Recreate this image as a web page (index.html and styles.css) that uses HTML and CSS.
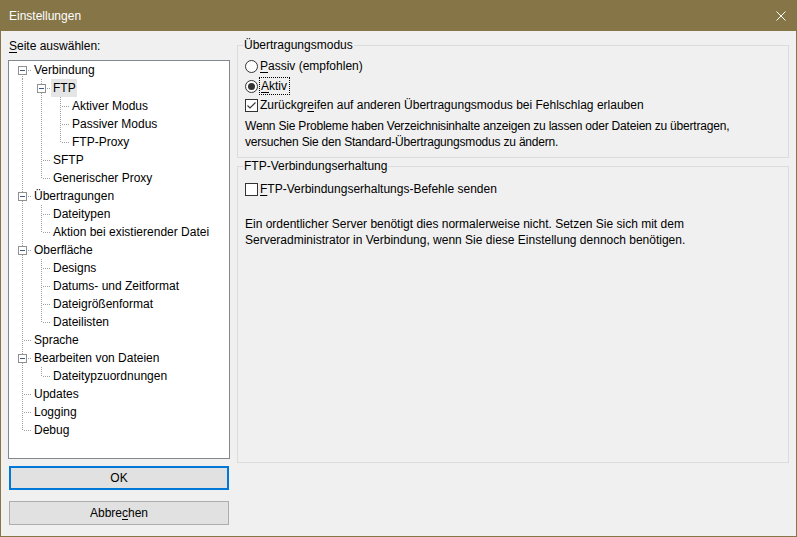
FILE: index.html
```html
<!DOCTYPE html>
<html lang="de">
<head>
<meta charset="utf-8">
<title>Einstellungen</title>
<link rel="stylesheet" href="styles.css">
</head>
<body>
<div class="window">
  <div class="titlebar">
    <span class="title">Einstellungen</span>
    <svg class="close" width="10" height="10" viewBox="0 0 10 10"><path d="M0.5 0.5L9.5 9.5M9.5 0.5L0.5 9.5" stroke="#fff" stroke-width="1" fill="none"/></svg>
  </div>
  <div class="content">
    <div class="left">
      <div class="caption"><u>S</u>eite auswählen:</div>
      <div class="tree">
        <div class="row"><span class="g first"><span class="box"></span></span><span class="lbl">Verbindung</span></div>
        <div class="row"><span class="g v"></span><span class="g tee"><span class="box"></span></span><span class="lbl sel">FTP</span></div>
        <div class="row"><span class="g v"></span><span class="g v"></span><span class="g tee"></span><span class="lbl">Aktiver Modus</span></div>
        <div class="row"><span class="g v"></span><span class="g v"></span><span class="g tee"></span><span class="lbl">Passiver Modus</span></div>
        <div class="row"><span class="g v"></span><span class="g v"></span><span class="g elbow"></span><span class="lbl">FTP-Proxy</span></div>
        <div class="row"><span class="g v"></span><span class="g tee"></span><span class="lbl">SFTP</span></div>
        <div class="row"><span class="g v"></span><span class="g elbow"></span><span class="lbl">Generischer Proxy</span></div>
        <div class="row"><span class="g tee"><span class="box"></span></span><span class="lbl">Übertragungen</span></div>
        <div class="row"><span class="g v"></span><span class="g tee"></span><span class="lbl">Dateitypen</span></div>
        <div class="row"><span class="g v"></span><span class="g elbow"></span><span class="lbl">Aktion bei existierender Datei</span></div>
        <div class="row"><span class="g tee"><span class="box"></span></span><span class="lbl">Oberfläche</span></div>
        <div class="row"><span class="g v"></span><span class="g tee"></span><span class="lbl">Designs</span></div>
        <div class="row"><span class="g v"></span><span class="g tee"></span><span class="lbl">Datums- und Zeitformat</span></div>
        <div class="row"><span class="g v"></span><span class="g tee"></span><span class="lbl">Dateigrößenformat</span></div>
        <div class="row"><span class="g v"></span><span class="g elbow"></span><span class="lbl">Dateilisten</span></div>
        <div class="row"><span class="g tee"></span><span class="lbl">Sprache</span></div>
        <div class="row"><span class="g tee"><span class="box"></span></span><span class="lbl">Bearbeiten von Dateien</span></div>
        <div class="row"><span class="g v"></span><span class="g elbow"></span><span class="lbl">Dateitypzuordnungen</span></div>
        <div class="row"><span class="g tee"></span><span class="lbl">Updates</span></div>
        <div class="row"><span class="g tee"></span><span class="lbl">Logging</span></div>
        <div class="row"><span class="g elbow"></span><span class="lbl">Debug</span></div>
      </div>
      <button class="btn btn-default" type="button">OK</button>
      <button class="btn btn-cancel" type="button">Abbre<u>c</u>hen</button>
    </div>
    <div class="right">
      <fieldset class="group group-mode">
        <legend>Übertragungsmodus</legend>
        <div class="opt opt-first"><span class="radio"></span><span class="text"><u>P</u>assiv (empfohlen)</span></div>
        <div class="opt opt-second"><span class="radio on"></span><span class="text focus"><u>A</u>ktiv</span></div>
        <div class="opt opt-third"><span class="check on"><svg width="11" height="11" viewBox="0 0 11 11"><path d="M1.5 5.5L4 8L9.5 2.5" stroke="#333" stroke-width="1.1" fill="none"/></svg></span><span class="text">Zurückgr<u>e</u>ifen auf anderen Übertragungsmodus bei Fehlschlag erlauben</span></div>
        <p class="para para-mode">Wenn Sie Probleme haben Verzeichnisinhalte anzeigen zu lassen oder Dateien zu übertragen,<br>versuchen Sie den Standard-Übertragungsmodus zu ändern.</p>
      </fieldset>
      <fieldset class="group group-keep">
        <legend>FTP-Verbindungserhaltung</legend>
        <div class="keep-body">
          <div class="opt"><span class="check"></span><span class="text"><u>F</u>TP-Verbindungserhaltungs-Befehle senden</span></div>
          <p class="para para-keep">Ein ordentlicher Server benötigt dies normalerweise nicht. Setzen Sie sich mit dem<br>Serveradministrator in Verbindung, wenn Sie diese Einstellung dennoch benötigen.</p>
        </div>
      </fieldset>
    </div>
  </div>
</div>
</body>
</html>
```
FILE: styles.css
```css
* { box-sizing: border-box; }
html, body { margin: 0; padding: 0; }
body {
  font-family: "Liberation Sans", Arial, sans-serif;
  font-size: 12px;
  color: #000;
  background: #f0f0f0;
}
u { text-underline-offset: 2px; }
.window {
  width: 797px;
  height: 537px;
  background: #857547;
  padding: 0 1px 1px 1px;
  display: flex;
  flex-direction: column;
}
.titlebar {
  height: 31px;
  flex: none;
  display: flex;
  align-items: center;
  justify-content: space-between;
  padding: 0 10px 0 8px;
  color: #fff;
}
.title { line-height: 16px; }
.close { display: block; }
.content {
  flex: 1;
  background: #f0f0f0;
  display: grid;
  grid-template-columns: 222px 552px;
  column-gap: 7px;
  padding: 6px 6px 0 7px;
  align-items: start;
}
.left { display: flex; flex-direction: column; }
.caption { line-height: 16px; margin: 1px 0 6px 1px; }
.tree {
  height: 399px;
  border: 1px solid #828790;
  background: #fff;
  padding: 0 0 0 4px;
}
.row { display: flex; height: 18px; align-items: flex-start; }
.g {
  width: 19px;
  height: 18px;
  flex: none;
  display: flex;
  justify-content: center;
  align-items: flex-start;
  background-repeat: no-repeat;
}
.g.v {
  background-image: repeating-linear-gradient(to bottom, #a0a0a0 0 1px, transparent 1px 2px);
  background-position: 9px 0;
  background-size: 1px 18px;
}
.g.tee {
  background-image: repeating-linear-gradient(to bottom, #a0a0a0 0 1px, transparent 1px 2px),
                    repeating-linear-gradient(to right, #a0a0a0 0 1px, transparent 1px 2px);
  background-position: 9px 0, 11px 9px;
  background-size: 1px 18px, 8px 1px;
}
.g.elbow {
  background-image: repeating-linear-gradient(to bottom, #a0a0a0 0 1px, transparent 1px 2px),
                    repeating-linear-gradient(to right, #a0a0a0 0 1px, transparent 1px 2px);
  background-position: 9px 0, 11px 9px;
  background-size: 1px 10px, 8px 1px;
}
.g.first {
  background-image: repeating-linear-gradient(to bottom, #a0a0a0 0 1px, transparent 1px 2px),
                    repeating-linear-gradient(to right, #a0a0a0 0 1px, transparent 1px 2px);
  background-position: 9px 9px, 11px 9px;
  background-size: 1px 9px, 8px 1px;
}
.box {
  width: 9px;
  height: 9px;
  margin-top: 5px;
  border: 1px solid #919191;
  background: #fff;
  display: flex;
  align-items: center;
  justify-content: center;
}
.box::before {
  content: "";
  width: 5px;
  height: 1px;
  background: #3a5a8c;
}
.lbl {
  line-height: 18px;
  padding: 0 2px;
  white-space: nowrap;
}
.lbl.sel { background: #e5e5e5; padding-right: 1px; }
.btn {
  font: inherit;
  color: #000;
  width: 220px;
  height: 24px;
  margin-left: 1px;
  background: #e1e1e1;
  border: 1px solid #adadad;
  padding: 0;
  line-height: 16px;
}
.btn-default { margin-top: 7px; border: 2px solid #0078d7; }
.btn-cancel { margin-top: 11px; }
.right { display: flex; flex-direction: column; }
.group {
  margin: 0;
  border: 1px solid #dcdcdc;
  padding: 4px 7px 7px 7px;
  min-width: 0;
}
.group legend {
  padding: 0 1px;
  margin-left: -2px;
  line-height: 16px;
}
.opt { display: flex; align-items: center; height: 18px; white-space: nowrap; }
.opt-second { margin-top: 2px; }
.opt-third { margin-top: 1px; }
.text { line-height: 16px; }
.text.focus { border: 1px dotted #000; padding: 0 2px 0 1px; margin-left: -1px; }
.radio {
  width: 13px;
  height: 13px;
  border: 1px solid #333;
  border-radius: 50%;
  background: #fff;
  margin-right: 2px;
  display: flex;
  align-items: center;
  justify-content: center;
  flex: none;
}
.radio.on::after {
  content: "";
  width: 7px;
  height: 7px;
  border-radius: 50%;
  background: #333;
}
.check {
  width: 13px;
  height: 13px;
  border: 1px solid #333;
  background: #fff;
  margin-right: 2px;
  flex: none;
  display: flex;
  align-items: center;
  justify-content: center;
}
.check svg { display: block; }
.para { margin: 0; line-height: 16px; white-space: nowrap; }
.para-mode { margin-top: 4px; letter-spacing: -0.2px; }
.group-keep { padding: 6px 7px 0 7px; }
.keep-body { height: 282px; }
.para-keep { margin-top: 18px; }
```
